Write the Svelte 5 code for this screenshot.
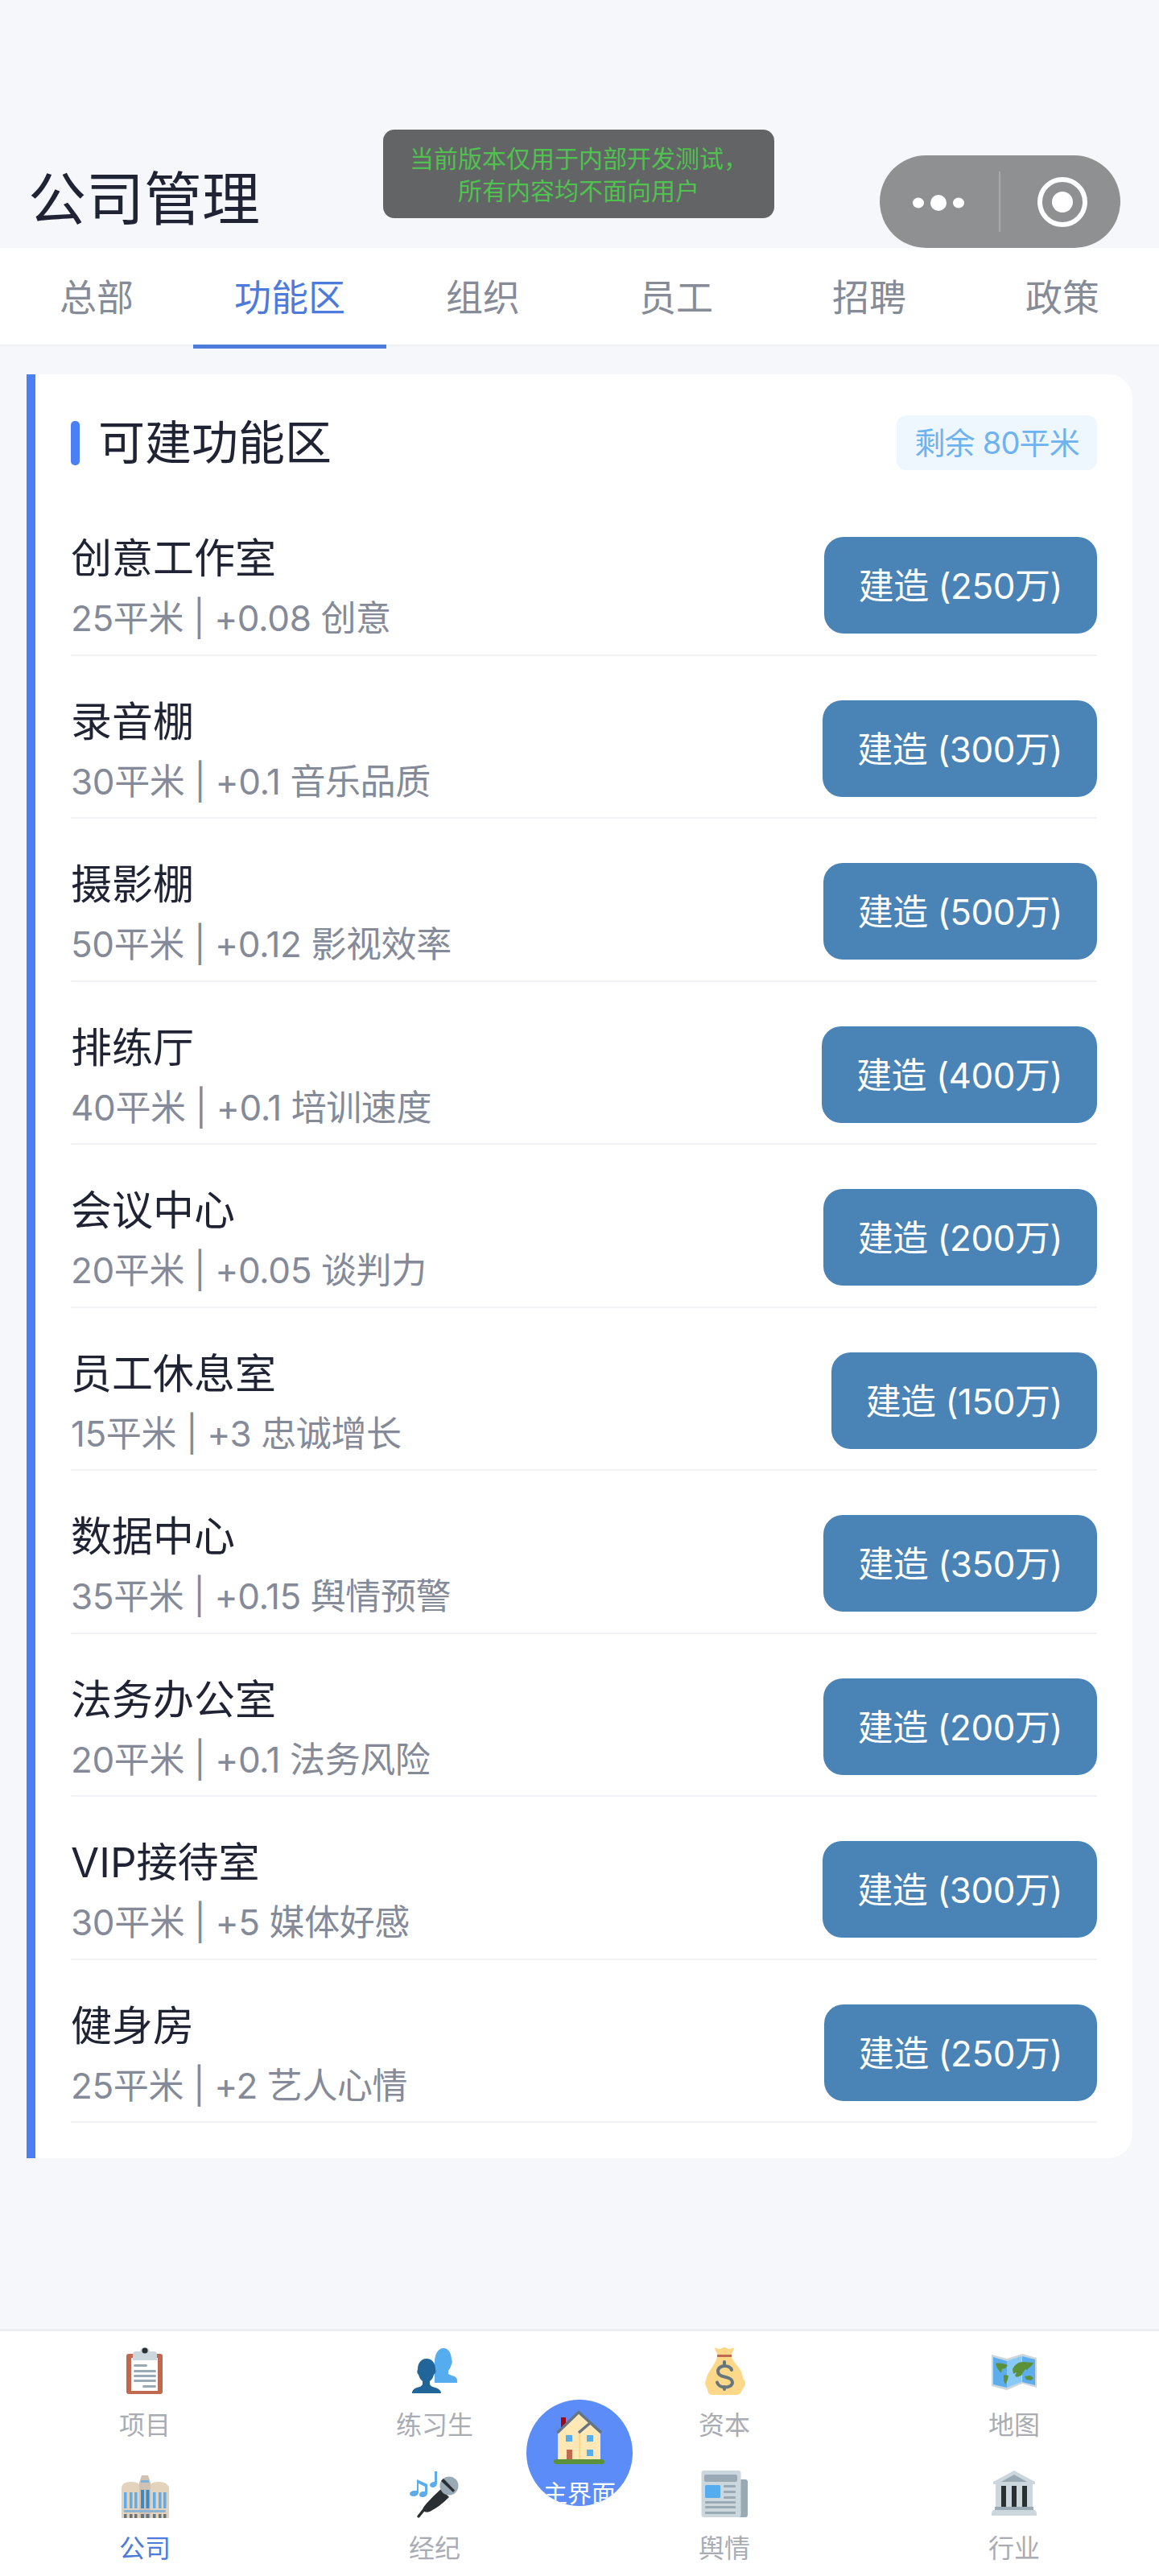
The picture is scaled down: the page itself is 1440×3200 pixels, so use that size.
<script>
  const tabs = ['总部', '功能区', '组织', '员工', '招聘', '政策'];
  const rooms = [
    ['创意工作室', '25平米 | +0.08 创意', '250万'],
    ['录音棚', '30平米 | +0.1 音乐品质', '300万'],
    ['摄影棚', '50平米 | +0.12 影视效率', '500万'],
    ['排练厅', '40平米 | +0.1 培训速度', '400万'],
    ['会议中心', '20平米 | +0.05 谈判力', '200万'],
    ['员工休息室', '15平米 | +3 忠诚增长', '150万'],
    ['数据中心', '35平米 | +0.15 舆情预警', '350万'],
    ['法务办公室', '20平米 | +0.1 法务风险', '200万'],
    ['VIP接待室', '30平米 | +5 媒体好感', '300万'],
    ['健身房', '25平米 | +2 艺人心情', '250万']
  ];
  const nav = [
    ['项目', 'clip', 0, false],
    ['练习生', 'busts', 0, false],
    ['资本', 'bag', 0, false],
    ['地图', 'map', 0, false],
    ['公司', 'office', -2, true],
    ['经纪', 'mic', -2, false],
    ['舆情', 'news', -2, false],
    ['行业', 'bank', -2, false]
  ];
</script>

<div class="page">
  <header class="top">
    <h1>公司管理</h1>
    <div class="toast">当前版本仅用于内部开发测试，<br />所有内容均不面向用户</div>
    <div class="capsule">
      <svg width="299" height="115" viewBox="0 0 299 115">
        <ellipse cx="48" cy="59" rx="7" ry="6.5" fill="#fff" />
        <ellipse cx="73" cy="59" rx="10" ry="10" fill="#fff" />
        <ellipse cx="98" cy="59" rx="7" ry="6.5" fill="#fff" />
        <rect x="148" y="20" width="2" height="75" fill="#a9aaac" />
        <circle cx="227" cy="58" r="28" fill="none" stroke="#fff" stroke-width="6" />
        <circle cx="227" cy="58" r="13" fill="#fff" />
      </svg>
    </div>
  </header>

  <nav class="tabs">
    {#each tabs as t, i}
      <div class="tab" class:on={i === 1}>{t}</div>
    {/each}
  </nav>

  <main>
    <section class="card">
      <div class="card-head">
        <h2>可建功能区</h2>
        <span class="badge">剩余 80平米</span>
      </div>
      {#each rooms as r}
        <div class="row">
          <div class="info">
            <div class="name">{r[0]}</div>
            <div class="sub">{r[1]}</div>
          </div>
          <button class="build">建造 ({r[2]})</button>
        </div>
      {/each}
    </section>
  </main>

  <footer class="bar">
    {#each nav as n}
      <div class="item" class:active={n[3]}>
        <svg class="ico" width="100" height="80" viewBox="0 {n[2]} 100 80">
          {#if n[1] === 'clip'}
            <rect x="27" y="19" width="45" height="50" rx="3" fill="#c1694f" />
            <rect x="33" y="24" width="33" height="41" fill="#fff" />
            <path d="M35 27v-7q0-4 4-4h5q1-5 6-5t6 5h5q4 0 4 4v7z" fill="#ccd6dd" />
            <circle cx="50" cy="15" r="3.6" fill="#292f33" />
            <g fill="#99aab5">
              <rect x="36" y="32" width="17" height="3" rx="1.5" />
              <rect x="36" y="39" width="28" height="3" rx="1.5" />
              <rect x="36" y="45" width="28" height="3" rx="1.5" />
              <rect x="36" y="51" width="28" height="3" rx="1.5" />
              <rect x="47" y="58" width="17" height="3" rx="1.5" />
            </g>
          {:else if n[1] === 'busts'}
            <path d="M50 55V30c0-10 4-18 11-18s10 8 10 14c1 2 1 4 0 6-1 3-2 6-4 8v4c3 2 8 2 10 5 1 1 1 3 1 6z" fill="#55acee" />
            <path d="M22 68c0-4 3-6 6-7 4-1 6-2 7-4v-4c-3-2-4-5-5-8-2-2-2-4-1-7 0-7 4-13 11-13s11 6 11 13c1 3 0 5-2 7-1 3-2 6-5 8v4c1 2 3 3 7 4 3 1 7 3 7 7z" fill="#226699" />
          {:else if n[1] === 'bag'}
            <path d="M38 12c3-1 4 1 6 1s3-2 6-2 4 2 6 2 3-2 6-1c0 3-3 5-3 8H41c0-3-3-5-3-8z" fill="#fdd888" />
            <path d="M41 23h18c2 6 8 11 12 18 2 4 1 8 4 11 2 3 1 7-2 10-1 3-3 8-8 8H35c-4 0-6-3-6-7-2-3-4-7-2-11 1-4 2-8 5-12 3-5 7-10 9-17z" fill="#fdd888" />
            <rect x="41" y="20" width="18" height="3" fill="#bf6952" />
            <path d="M59 39c-1-3-5-5-9-5s-8 3-8 6.500c0 4 3 6 8 7s10 3 10 7c0 3.500-4 6-9 6s-9-2.500-10-6M50 29v5M50 60v3" fill="none" stroke="#67757f" stroke-width="4" stroke-linecap="round" />
          {:else if n[1] === 'map'}
            <path d="M22 20l19 5 19-6 18 5v37l-18-5-19 8-19-5z" fill="#ccd6dd" />
            <path d="M24 23l17 5v33l-17-4z" fill="#5dadec" />
            <path d="M41 28l18-6v32l-18 7z" fill="#88c9f9" />
            <path d="M60 22l16 4v32l-16-4z" fill="#5dadec" />
            <path d="M27 31c5-1 10 0 15 2l-3 4-4 1-1 5c-3-3-6-7-7-12zM37 45l6 1-1 5-3 6-2-5zM48 38c3-6 8-9 13-9l13 1c-2 5-6 6-8 9l-2-1-3 4-2 4-6 2-2-2 2-4-4 2zM63 47l7-1 4 3-3 3-6-1z" fill="#5c913b" />
          {:else if n[1] === 'office'}
            <path d="M21 68V31q0-8 12-8t12 8v37zM55 68V31q0-8 12-8t13 8v37z" fill="#e3d3bd" />
            <path d="M43 68V24l3-9h8l3 9v44z" fill="#d0c3b3" />
            <g fill="#5dadec">
              <rect x="24" y="36" width="3.500" height="20" /><rect x="31" y="36" width="3.500" height="20" /><rect x="37" y="36" width="3.500" height="20" />
              <rect x="60" y="36" width="3.500" height="20" /><rect x="67" y="36" width="3.500" height="20" /><rect x="73" y="36" width="3.500" height="20" />
              <rect x="45" y="21" width="10" height="3" opacity=".7" />
            </g>
            <rect x="45" y="33" width="4" height="23" fill="#3b88c3" /><rect x="51.500" y="33" width="4" height="23" fill="#3b88c3" />
            <g fill="#8ab4d4"><rect x="24" y="58" width="52" height="3" /></g>
            <g fill="#66757f">
              <rect x="24" y="63" width="3.500" height="5" /><rect x="31" y="63" width="3.500" height="5" /><rect x="37" y="63" width="3.500" height="5" /><rect x="45" y="63" width="4" height="5" /><rect x="51.500" y="63" width="4" height="5" /><rect x="60" y="63" width="3.500" height="5" /><rect x="67" y="63" width="3.500" height="5" /><rect x="73" y="63" width="3.500" height="5" />
            </g>
          {:else if n[1] === 'mic'}
            <path d="M30 66l8-10" stroke="#292f33" stroke-width="3.500" stroke-linecap="round" />
            <path d="M36 55c4-6 14-16 22-23l10 10C61 49 52 56 44 60c-6 2-10-1-8-5z" fill="#292f33" />
            <circle cx="68" cy="28" r="11.500" fill="#99aab5" />
            <path d="M58 22l15 14 2-2.500-14-14.500z" fill="#292f33" />
            <g fill="#5dadec">
              <path d="M28 20l13 6v11c0 3-3 5-6 5s-4-1-4-3 2-4 5-4h2v-6l-8-4v11c0 3-3 5-6 5s-5-1-5-3 3-4 6-4h3z" />
              <path d="M50 10h3v15c0 3-3 5-5 5s-4-1-4-3 3-4 6-4z" />
            </g>
          {:else if n[1] === 'news'}
            <rect x="60" y="20" width="19" height="47" rx="3" fill="#99aab5" />
            <rect x="21.500" y="9" width="49" height="58" rx="3" fill="#ccd6dd" />
            <rect x="25" y="14" width="41" height="9" rx="2" fill="#99aab5" />
            <rect x="26" y="27" width="19" height="16" rx="1.500" fill="#55acee" />
            <g fill="#99aab5">
              <rect x="49" y="27" width="15" height="3" rx="1" /><rect x="49" y="34" width="15" height="3" rx="1" /><rect x="49" y="41" width="15" height="3" rx="1" />
              <rect x="26" y="47" width="38" height="3" rx="1" /><rect x="26" y="53" width="38" height="3" rx="1" /><rect x="26" y="60" width="38" height="3" rx="1" />
            </g>
          {:else if n[1] === 'bank'}
            <path d="M50 9l26 14v3H24v-3z" fill="#ccd6dd" />
            <path d="M50 14l16 9H34z" fill="#99aab5" />
            <rect x="27" y="26" width="46" height="31" fill="#ccd6dd" />
            <rect x="34" y="28" width="6" height="26" fill="#292f33" />
            <rect x="47" y="28" width="6" height="26" fill="#292f33" />
            <rect x="60" y="28" width="6" height="26" fill="#292f33" />
            <rect x="26" y="54" width="48" height="4" fill="#99aab5" />
            <path d="M24 58h52l2 3v4H22v-4z" fill="#ccd6dd" />
          {/if}
        </svg>
        <div class="label">{n[0]}</div>
      </div>
    {/each}
    <div class="home">
      <svg width="64" height="70" viewBox="68 43 64 70">
        <rect x="77" y="53" width="6" height="12" fill="#a0041e" />
        <path d="M73 105V72l26-24 15 13 12 11v33z" fill="#ffe8b6" />
        <rect x="99" y="70" width="2" height="35" fill="#ffd983" />
        <path d="M72.500 72L99 46.500 127 72" fill="none" stroke="#66757f" stroke-width="3.500" stroke-linejoin="round" />
        <path d="M99 72l14-12" fill="none" stroke="#66757f" stroke-width="3.500" />
        <g fill="#55acee">
          <rect x="83" y="75" width="8" height="8" /><rect x="109" y="75" width="8" height="8" /><rect x="109" y="93" width="8" height="8" />
        </g>
        <rect x="84" y="93" width="7" height="12" fill="#c1694f" />
        <rect x="68" y="105" width="63" height="6" rx="3" fill="#5c913b" />
      </svg>
      <div class="home-label">主界面</div>
    </div>
  </footer>
</div>

<style>
  :global(body) {
    margin: 0;
    background: #f5f7fb;
  }
  .page {
    min-height: 3200px;
    display: flex;
    flex-direction: column;
    position: relative;
    font-family: Inter, "Noto Sans CJK SC", sans-serif;
    color: #1f2333;
  }
  .top {
    height: 308px;
    box-sizing: border-box;
    padding: 202px 0 0 35px;
  }
  h1 {
    margin: 0;
    font-size: 72px;
    line-height: 90px;
    font-weight: 400;
  }
  .toast {
    position: absolute;
    left: 476px;
    top: 161px;
    width: 486px;
    height: 110px;
    box-sizing: border-box;
    padding-top: 16px;
    border-radius: 14px;
    background: #636466;
    color: #4fc24f;
    font-size: 30px;
    line-height: 40px;
    text-align: center;
  }
  .capsule {
    position: absolute;
    left: 1093px;
    top: 193px;
    width: 299px;
    height: 115px;
    border-radius: 58px;
    background: #8f9092;
  }
  .capsule svg {
    display: block;
  }
  .tabs {
    display: grid;
    grid-template-columns: repeat(6, 240px);
    height: 120px;
    background: #fff;
    border-bottom: 2px solid #eef0f4;
  }
  .tab {
    position: relative;
    text-align: center;
    font-size: 46px;
    line-height: 122px;
    color: #868b98;
  }
  .tab.on {
    color: #4d7bdc;
  }
  .tab.on::after {
    content: "";
    position: absolute;
    left: 0;
    right: 0;
    top: 120px;
    height: 5px;
    background: #4d7bdc;
  }
  main {
    flex: 1;
    padding: 35px 33px 0;
  }
  .card {
    box-sizing: border-box;
    width: 1374px;
    background: #fff;
    border-left: 11px solid #4a7ff5;
    border-radius: 0 30px 30px 0;
    padding: 51px 44px 44px 44px;
  }
  .card-head {
    display: flex;
    justify-content: space-between;
    align-items: center;
    height: 68px;
    margin-bottom: 28px;
  }
  h2 {
    margin: 0;
    position: relative;
    padding-left: 34px;
    font-size: 58px;
    line-height: 68px;
    font-weight: 400;
  }
  h2::before {
    content: "";
    position: absolute;
    left: 0;
    top: 7px;
    width: 11px;
    height: 55px;
    border-radius: 5px;
    background: #4a7ff5;
  }
  .badge {
    box-sizing: border-box;
    height: 68px;
    padding: 0 22px;
    border-radius: 12px;
    background: #eef6fe;
    color: #6db3ef;
    font-size: 38px;
    line-height: 68px;
    letter-spacing: -0.8px;
  }
  .row {
    display: flex;
    justify-content: space-between;
    align-items: flex-start;
    height: 202.5px;
    box-sizing: border-box;
    padding-top: 55px;
    border-bottom: 2px solid #f1f2f5;
  }
  .name {
    font-size: 51px;
    line-height: 62px;
    margin-top: -4px;
  }
  .sub {
    font-size: 44px;
    line-height: 54px;
    margin-top: 16px;
    color: #858a99;
    letter-spacing: -0.4px;
  }
  .build {
    height: 120px;
    padding: 0 43px 4px;
    border: none;
    border-radius: 24px;
    background: #4a83b5;
    color: #fff;
    font: inherit;
    font-size: 44px;
    letter-spacing: -0.5px;
  }
  .bar {
    position: relative;
    display: grid;
    grid-template-columns: repeat(4, 360px);
    grid-auto-rows: 153px;
    height: 307px;
    box-sizing: border-box;
    padding-top: 9px;
    background: #fff;
    border-top: 3px solid #eceef1;
  }
  .item {
    text-align: center;
    color: #a9adb3;
    font-size: 32px;
  }
  .item.active {
    color: #4d7bdc;
  }
  .ico {
    display: block;
    margin: 0 auto;
  }
  .label {
    line-height: 55px;
  }
  .home {
    position: absolute;
    left: 654px;
    top: 85px;
    width: 132px;
    height: 132px;
    border-radius: 50%;
    overflow: hidden;
    background: #5b8cf7;
    text-align: center;
  }
  .home svg {
    display: block;
    margin: 12px auto 0;
  }
  .home-label {
    margin-top: 16px;
    color: #fff;
    font-size: 30px;
    line-height: 36px;
    white-space: nowrap;
  }
</style>
